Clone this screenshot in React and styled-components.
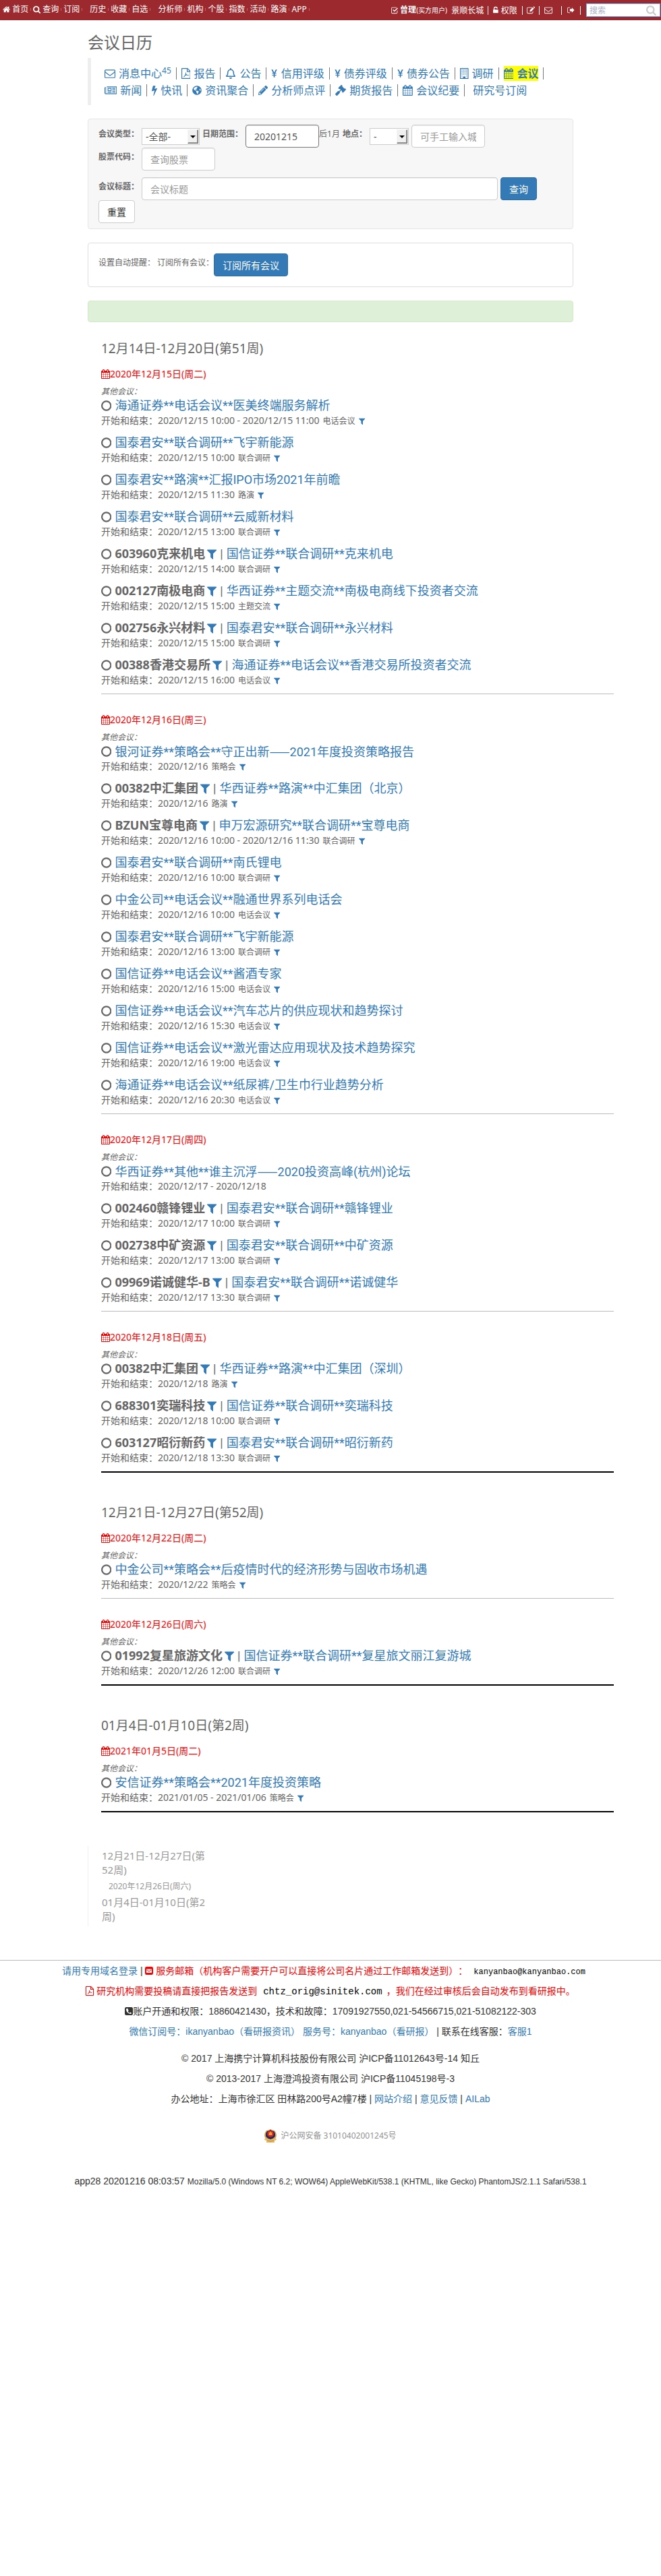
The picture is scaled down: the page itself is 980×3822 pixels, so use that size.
import React from 'react';
import styled, { createGlobalStyle } from 'styled-components';
import { FaPencilAlt, FaRegBell, FaGlobeAmericas, FaGavel } from 'react-icons/fa';

const latin = '"Noto Sans", "Noto Sans CJK SC", sans-serif';
const compact = 'Roboto, "Noto Sans CJK SC", sans-serif';

const GlobalStyle = createGlobalStyle`
  *, *::before, *::after { box-sizing: border-box; }
  body {
    margin: 0;
    background: #fff;
    color: #666;
    font: 12px/17px ${latin};
    text-spacing-trim: space-all;
  }
  a { color: #337ab7; text-decoration: none; }
  h1, h2, h3, h4, p { margin: 0; padding: 0; font-weight: 400; }
  input, select, button { font-family: inherit; margin: 0; }
`;

/* ---------- icons ---------- */

const GLYPHS = {
  calendar: ['64 0 1664 1792', 'M192 1664h288v-288h-288v288zm352 0h320v-288h-320v288zm-352-352h288v-320h-288v320zm352 0h320v-320h-320v320zm-352-384h288v-288h-288v288zm736 736h320v-288h-320v288zm-384-736h320v-288h-320v288zm768 736h288v-288h-288v288zm-384-352h320v-320h-320v320zm-352-864v-288q0-13-9.5-22.5t-22.5-9.5h-64q-13 0-22.5 9.5t-9.5 22.5v288q0 13 9.5 22.5t22.5 9.5h64q13 0 22.5-9.5t9.5-22.5zm736 864h288v-320h-288v320zm-384-384h320v-288h-320v288zm384 0h288v-288h-288v288zm32-480v-288q0-13-9.5-22.5t-22.5-9.5h-64q-13 0-22.5 9.5t-9.5 22.5v288q0 13 9.5 22.5t22.5 9.5h64q13 0 22.5-9.5t9.5-22.5zm384-64v1280q0 52-38 90t-90 38h-1408q-52 0-90-38t-38-90v-1280q0-52 38-90t90-38h128v-96q0-66 47-113t113-47h64q66 0 113 47t47 113v96h384v-96q0-66 47-113t113-47h64q66 0 113 47t47 113v96h128q52 0 90 38t38 90z'],
  filter: ['192 0 1408 1792', 'M1595 295q17 41-14 70l-493 493v742q0 42-39 59-13 5-25 5-27 0-45-19l-256-256q-19-19-19-45v-486l-493-493q-31-29-14-70 17-39 59-39h1280q42 0 59 39z'],
  circle: ['128 0 1536 1792', 'M896 352q-148 0-273 73t-198 198-73 273 73 273 198 198 273 73 273-73 198-198 73-273-73-273-198-198-273-73zm768 544q0 209-103 385.5t-279.5 279.5-385.5 103-385.5-103-279.5-279.5-103-385.5 103-385.5 279.5-279.5 385.5-103 385.5 103 279.5 279.5 103 385.5z'],
  home: ['64 0 1664 1792', 'M1472 992v480q0 26-19 45t-45 19h-384v-384h-256v384h-384q-26 0-45-19t-19-45v-480q0-1 .5-3t.5-3l575-474 575 474q1 2 1 6zm223-69l-62 74q-8 9-21 11h-3q-13 0-21-7l-692-577-692 577q-12 8-24 7-13-2-21-11l-62-74q-8-10-7-23.5t11-21.5l719-599q32-26 76-26t76 26l244 204v-195q0-14 9-23t23-9h192q14 0 23 9t9 23v408l219 182q10 8 11 21.5t-7 23.5z'],
  search: ['64 0 1664 1792', 'M1216 832q0-185-131.5-316.5t-316.5-131.5-316.5 131.5-131.5 316.5 131.5 316.5 316.5 131.5 316.5-131.5 131.5-316.5zm512 832q0 52-38 90t-90 38q-54 0-90-38l-343-342q-179 124-399 124-143 0-273.5-55.5t-225-150-150-225-55.5-273.5 55.5-273.5 150-225 225-150 273.5-55.5 273.5 55.5 225 150 150 225 55.5 273.5q0 220-124 399l343 343q37 37 37 90z'],
  envelope: ['0 0 1792 1792', 'M1664 1504v-768q-32 36-69 66-268 206-426 338-51 43-83 67t-86.5 48.5-102.5 24.5h-2q-48 0-102.5-24.5t-86.5-48.5-83-67q-158-132-426-338-37-30-69-66v768q0 13 9.5 22.5t22.5 9.5h1472q13 0 22.5-9.5t9.5-22.5zm0-1051v-24.5l-.5-13-3-12.5-5.5-9-9-7.5-14-2.5h-1472q-13 0-22.5 9.5t-9.5 22.5q0 168 147 284 193 152 401 317 6 5 35 29.5t46 37.5 44.5 31.5 50.5 27.5 43 9h2q20 0 43-9t50.5-27.5 44.5-31.5 46-37.5 35-29.5q208-165 401-317 54-43 100.5-115.5t46.5-131.5zm128-37v1088q0 66-47 113t-113 47h-1472q-66 0-113-47t-47-113v-1088q0-66 47-113t113-47h1472q66 0 113 47t47 113z'],
  bolt: ['448 0 896 1792', 'M1333 566q18 20 7 44l-540 1157q-13 25-42 25-4 0-14-2-17-5-25.5-19t-4.5-30l197-808-406 101q-4 1-12 1-18 0-31-11-18-15-13-39l201-825q4-14 16-23t28-9h328q19 0 32 12.5t13 29.5q0 8-5 18l-171 463 396-98q8-2 12-2 19 0 34 15z'],
  yen: ['384 0 1024 1792', 'M800 1536V1230H544V1110H800V985L775 930H544V810H715L420 256H650L896 760L1142 256H1372L1077 810H1248V930H1017L992 985V1110H1248V1230H992V1536z'],
  building: ['192 0 1408 1792', 'M256 0h1280q64 0 64 64v1664q0 64-64 64H256q-64 0-64-64V64q0-64 64-64zM320 128v1536h384v-256h384v256h384V128zM448 256h128v128H448zm256 0h128v128H704zm256 0h128v128H960zm256 0h128v128h-128zM448 512h128v128H448zm256 0h128v128H704zm256 0h128v128H960zm256 0h128v128h-128zM448 768h128v128H448zm256 0h128v128H704zm256 0h128v128H960zm256 0h128v128h-128zM448 1024h128v128H448zm256 0h128v128H704zm256 0h128v128H960zm256 0h128v128h-128zM448 1280h128v128H448zm768 0h128v128h-128z'],
  news: ['0 0 2048 1792', 'M384 256h1664v1152q0 128-128 128H192Q0 1536 0 1344V384h256v960q0 64 64 64h1540q60 0 60-64V384H384zM128 512v832q0 64 64 64V512zM512 512h640v512H512zm128 128v256h384V640zM1280 512h512v128h-512zm0 256h512v128h-512zm0 256h512v128h-512zM512 1152h640v128H512zm768 128h512v-64h-512z'],
  check: ['128 0 1664 1792', 'M416 256h832q70 0 130 30l-98 98H416q-160 0-160 160v832q0 160 160 160h832q160 0 160-160v-318l128-128v446q0 288-288 288H416q-288 0-288-288V544q0-288 288-288zM450 880l150-150 258 258 614-614 150 150-764 764z'],
  lock: ['320 0 1152 1792', 'M640 768h736q96 0 96 96v576q0 96-96 96H416q-96 0-96-96V864q0-96 96-96h32V576q0-448 448-448t448 448h-192q0-256-256-256T640 576z'],
  edit: ['0 0 1792 1792', 'M288 256h832q70 0 130 30l-98 98H288q-160 0-160 160v832q0 160 160 160h832q160 0 160-160v-126l128-128v254q0 288-288 288H288Q0 1664 0 1376V544q0-288 288-288zM672 928l640-640 288 288-640 640H672zM1408 192l92-92q68-68 136 0l152 152q68 68 0 136l-92 92z'],
  signout: ['64 0 1664 1792', 'M352 256h320v128H352q-160 0-160 160v704q0 160 160 160h320v128H352Q64 1536 64 1248V544q0-288 288-288zM640 640h448V352l544 544-544 544v-288H640z'],
  mailSquare: ['128 0 1536 1792', 'M416 128h960q288 0 288 288v960q0 288-288 288H416q-288 0-288-288V416q0-288 288-288zM384 576v640q0 64 64 64h896q64 0 64-64V576H384zM470 660l426 300 426-300v130l-426 300-426-300z'],
  phoneSquare: ['128 0 1536 1792', 'M416 128h960q288 0 288 288v960q0 288-288 288H416q-288 0-288-288V416q0-288 288-288zM500 384q-116 60-116 170 0 330 265 589t589 265q110 0 170-116l-20-70-230-120q-40 0-120 120-60 0-180-110-150-140-120-210 90-60 100-120L680 384z'],
  pdf: ['128 0 1536 1792', 'M256 0h896l512 512v1184q0 96-96 96H224q-96 0-96-96V96q0-96 96-96zM256 128v1536h1280V640h-512V128zm896 48v336h336zM820 720q110-20 80 180 50 150 160 210 300-20 300 90-30 120-330-10l-260 70q-170 280-260 260-100-60 180-310l140-300q-80-170-10-190z'],
};

const IconSvg = styled.svg`
  height: ${(p) => p.$size || '1em'};
  width: auto;
  fill: currentColor;
  fill-rule: evenodd;
  vertical-align: -2px;
  flex: none;
`;

function Icon({ name, size }) {
  const [box, d] = GLYPHS[name];
  return (
    <IconSvg viewBox={box} $size={size} aria-hidden="true">
      <path d={d} />
    </IconSvg>
  );
}

/* ---------- top bar ---------- */

const TopBar = styled.header`
  display: flex;
  justify-content: space-between;
  align-items: center;
  height: 30px;
  padding: 0 1px 0 4px;
  background: #9c292e;
  color: #fff;
  white-space: nowrap;
  a { color: #fff; }
`;
const TopNav = styled.nav`
  display: flex;
  gap: 8px;
  padding-bottom: 3px;
`;
const NavGroup = styled.div`
  display: flex;
`;
const NavLink = styled.a`
  display: flex;
  align-items: center;
  gap: 3px;
  &::after {
    content: '';
    width: 1px;
    height: 4px;
    margin-right: 3px;
    background: #b9686c;
  }
`;
const UserBar = styled.div`
  display: flex;
  align-items: center;
  gap: 6px;
`;
const UserName = styled.a`
  display: flex;
  align-items: center;
  gap: 2px;
  small { font-size: 10px; }
`;
const Tool = styled.a`
  display: flex;
  align-items: center;
  gap: 4px;
  padding: ${(p) => p.$pad || '0 1px'};
`;
const Bar = styled.i`
  width: 1px;
  height: 13px;
  background: #fff;
`;
const SearchBox = styled.label`
  display: flex;
  align-items: center;
  width: 110px;
  height: 20px;
  margin-left: 2px;
  padding: 0 5px 0 4px;
  background: #fff;
  border: 1px solid #66afe9;
  color: #ccc;
  input {
    width: 100%;
    min-width: 0;
    padding: 0;
    border: 0;
    outline: 0;
    background: none;
    font-size: 12px;
    &::placeholder { color: #aab2c8; opacity: 1; }
  }
`;

/* ---------- page ---------- */

const Page = styled.main`
  max-width: 750px;
  margin: 0 auto;
  padding: 0 15px;
`;
const Title = styled.h1`
  padding: 16px 0 6px;
  font-size: 24px;
  line-height: 34px;
`;
const Topics = styled.nav`
  border-left: 5px solid #eee;
  padding: 10px 0 10px 20px;
  margin-bottom: 20px;
  font-size: 16px;
  white-space: nowrap;
`;
const TopicLine = styled.div`
  display: flex;
  align-items: center;
  height: 25px;
`;
const Topic = styled.span`
  display: flex;
  align-items: center;
  margin-left: ${(p) => (p.$last ? '5px' : '0')};
  a {
    display: flex;
    align-items: center;
    gap: 5px;
    line-height: 22px;
    font-weight: ${(p) => (p.$active ? 700 : 400)};
    background: ${(p) => (p.$active ? '#ff0' : 'none')};
  }
  sup { align-self: flex-start; margin-left: -5px; font-size: 12px; line-height: 14px; }
  &::after {
    content: '';
    display: ${(p) => (p.$last ? 'none' : 'block')};
    width: 1px;
    height: 18px;
    margin: 0 7px;
    background: #777;
  }
`;

const Panel = styled.section`
  margin-bottom: 20px;
  padding: ${(p) => p.$pad || '8px 15px'};
  border: 1px solid ${(p) => p.$line || '#ddd'};
  border-radius: 4px;
  background: ${(p) => p.$bg || '#fff'};
`;
const FormRow = styled.div`
  display: flex;
  gap: ${(p) => p.$gap || '4px'};
  margin-top: ${(p) => p.$top || '0px'};
  align-items: center;
`;
const DateGroup = styled.div`
  display: flex;
`;
const Label = styled.label`
  align-self: flex-start;
  padding-top: 5px;
  font-weight: ${(p) => (p.$plain ? 400 : 700)};
  white-space: nowrap;
`;
const TextInput = styled.input`
  width: ${(p) => (p.$wide ? '528px' : '109px')};
  flex: 0 1 auto;
  min-width: 0;
  height: 34px;
  padding: 6px 12px;
  border: 1px solid ${(p) => (p.$dark ? '#777' : '#ccc')};
  border-radius: 4px;
  background: #fff;
  color: #555;
  font-size: 14px;
  box-shadow: inset 0 1px 1px rgba(0, 0, 0, 0.075);
  &::placeholder { color: #999; opacity: 1; }
`;
const SelectWrap = styled.span`
  display: flex;
  align-items: stretch;
  width: ${(p) => p.$w};
  height: 25px;
  padding: 1px;
  border: 1px solid #ccc;
  background: #fff;
  position: relative;
  &::before {
    content: '';
    position: absolute;
    right: 1px;
    top: 1px;
    width: 16px;
    height: 21px;
    background: #f0f0f0;
    border: 1px solid;
    border-color: #f4f4f4 #696969 #696969 #f4f4f4;
    box-shadow: inset -1px -1px #a0a0a0;
    pointer-events: none;
  }
  &::after {
    content: '';
    position: absolute;
    right: 5px;
    top: 10px;
    border: 4px solid transparent;
    border-top-color: #000;
    border-bottom: 0;
    pointer-events: none;
  }
`;
const Select = styled.select`
  width: 100%;
  padding: 0 4px;
  border: 0;
  background: none;
  appearance: none;
  color: #555;
  font-size: 14px;
`;
const Button = styled.button`
  height: 34px;
  padding: 0 12px;
  border: 1px solid ${(p) => (p.$primary ? '#2e6da4' : '#ccc')};
  border-radius: 4px;
  background: ${(p) => (p.$primary ? '#337ab7' : '#fff')};
  color: ${(p) => (p.$primary ? '#fff' : '#333')};
  font-size: 14px;
  white-space: nowrap;
`;

const Weeks = styled.div`
  margin: 0 -60px 0 20px;
  padding-bottom: 10px;
`;
const WeekTitle = styled.h2`
  padding: 7px 0 16px;
  font-size: 19px;
  line-height: 24px;
`;
const Day = styled.section`
  margin-bottom: ${(p) => (p.$last ? '40px' : '28px')};
  border-bottom: ${(p) => (p.$last ? '2px solid #000' : '1px solid #bbb')};
`;
const DayTitle = styled.h3`
  padding-bottom: 7px;
  color: #f00;
  font-size: 14px;
  line-height: 20px;
`;
const Kind = styled.em`
  display: block;
`;
const Meeting = styled.article`
  padding-bottom: 10px;
`;
const MeetingTitle = styled.h4`
  display: flex;
  align-items: center;
  gap: 5px;
  height: 25px;
  font: 18px/25px ${compact};
  white-space: nowrap;
`;
const Dash = styled.span`
  font-family: "Noto Sans CJK SC", sans-serif;
`;
const Stock = styled.b`
  display: flex;
  align-items: center;
  gap: 3px;
  font-family: ${latin};
  a { display: flex; }
`;
const When = styled.p`
  font-size: 14px;
  line-height: 20px;
  small { margin-left: 5px; font-size: 12px; line-height: 1; }
  small a { margin-left: 5px; }
`;

const Outline = styled.nav`
  width: 180px;
  padding: 4px 0;
  border-left: 1px solid #eee;
`;
const OutlineLink = styled.a`
  display: block;
  padding-left: ${(p) => (p.$sub ? '30px' : '20px')};
  margin: ${(p) => (p.$sub ? '5px 0' : '0')};
  color: #999;
  font-size: ${(p) => (p.$sub ? '12px' : '15px')};
  line-height: ${(p) => (p.$sub ? '17px' : '21px')};
`;

const Footer = styled.footer`
  margin-top: 50px;
  border-top: 1px solid #bbb;
  padding-top: 5px;
  color: #333;
  font: 14px/20px "Liberation Sans", "Noto Sans CJK SC", sans-serif;
  text-align: center;
  white-space: nowrap;
`;
const Line = styled.p`
  margin-bottom: ${(p) => p.$after || '10px'};
  color: ${(p) => (p.$red ? '#f00' : 'inherit')};
`;
const Red = styled.span`
  color: #f00;
`;
const Mail = styled.span`
  margin: 0 ${(p) => p.$after} 0 9px;
  color: #000;
  font-family: "Liberation Mono", monospace;
  font-size: ${(p) => p.$size};
  line-height: 1;
`;
const Police = styled.a`
  display: flex;
  justify-content: center;
  align-items: center;
  gap: 6px;
  height: 34px;
  margin: 28px 0 40px;
  color: #939393;
  font: 12px/20px ${latin};
`;
const Agent = styled.small`
  font-size: 12px;
  line-height: 1;
`;

/* ---------- data ---------- */

const NAV = [
  [['首页', 'home'], ['查询', 'search'], ['订阅']],
  [['历史'], ['收藏'], ['自选']],
  [['分析师'], ['机构'], ['个股'], ['指数'], ['活动'], ['路演'], ['APP']],
];

const TOPICS = [
  [
    { t: '消息中心', i: <Icon name="envelope" />, sup: '45' },
    { t: '报告', i: <Icon name="pdf" /> },
    { t: '公告', i: <FaRegBell size={16} /> },
    { t: '信用评级', i: <Icon name="yen" /> },
    { t: '债券评级', i: <Icon name="yen" /> },
    { t: '债券公告', i: <Icon name="yen" /> },
    { t: '调研', i: <Icon name="building" /> },
    { t: '会议', i: <Icon name="calendar" />, active: true },
  ],
  [
    { t: '新闻', i: <Icon name="news" /> },
    { t: '快讯', i: <Icon name="bolt" /> },
    { t: '资讯聚合', i: <FaGlobeAmericas size={14} /> },
    { t: '分析师点评', i: <FaPencilAlt size={14} /> },
    { t: '期货报告', i: <FaGavel size={16} /> },
    { t: '会议纪要', i: <Icon name="calendar" /> },
    { t: '研究号订阅', last: true },
  ],
];

// [title, time, kind, stock]
const WEEKS = [
  {
    title: '12月14日-12月20日(第51周)',
    days: [
      ['2020年12月15日(周二)', [
        ['海通证券**电话会议**医美终端服务解析', '2020/12/15 10:00 - 2020/12/15 11:00', '电话会议'],
        ['国泰君安**联合调研**飞宇新能源', '2020/12/15 10:00', '联合调研'],
        ['国泰君安**路演**汇报IPO市场2021年前瞻', '2020/12/15 11:30', '路演'],
        ['国泰君安**联合调研**云威新材料', '2020/12/15 13:00', '联合调研'],
        ['国信证券**联合调研**克来机电', '2020/12/15 14:00', '联合调研', '603960克来机电'],
        ['华西证券**主题交流**南极电商线下投资者交流', '2020/12/15 15:00', '主题交流', '002127南极电商'],
        ['国泰君安**联合调研**永兴材料', '2020/12/15 15:00', '联合调研', '002756永兴材料'],
        ['海通证券**电话会议**香港交易所投资者交流', '2020/12/15 16:00', '电话会议', '00388香港交易所'],
      ]],
      ['2020年12月16日(周三)', [
        ['银河证券**策略会**守正出新——2021年度投资策略报告', '2020/12/16', '策略会'],
        ['华西证券**路演**中汇集团（北京）', '2020/12/16', '路演', '00382中汇集团'],
        ['申万宏源研究**联合调研**宝尊电商', '2020/12/16 10:00 - 2020/12/16 11:30', '联合调研', 'BZUN宝尊电商'],
        ['国泰君安**联合调研**南氏锂电', '2020/12/16 10:00', '联合调研'],
        ['中金公司**电话会议**融通世界系列电话会', '2020/12/16 10:00', '电话会议'],
        ['国泰君安**联合调研**飞宇新能源', '2020/12/16 13:00', '联合调研'],
        ['国信证券**电话会议**酱酒专家', '2020/12/16 15:00', '电话会议'],
        ['国信证券**电话会议**汽车芯片的供应现状和趋势探讨', '2020/12/16 15:30', '电话会议'],
        ['国信证券**电话会议**激光雷达应用现状及技术趋势探究', '2020/12/16 19:00', '电话会议'],
        ['海通证券**电话会议**纸尿裤/卫生巾行业趋势分析', '2020/12/16 20:30', '电话会议'],
      ]],
      ['2020年12月17日(周四)', [
        ['华西证券**其他**谁主沉浮——2020投资高峰(杭州)论坛', '2020/12/17 - 2020/12/18'],
        ['国泰君安**联合调研**赣锋锂业', '2020/12/17 10:00', '联合调研', '002460赣锋锂业'],
        ['国泰君安**联合调研**中矿资源', '2020/12/17 13:00', '联合调研', '002738中矿资源'],
        ['国泰君安**联合调研**诺诚健华', '2020/12/17 13:30', '联合调研', '09969诺诚健华-B'],
      ]],
      ['2020年12月18日(周五)', [
        ['华西证券**路演**中汇集团（深圳）', '2020/12/18', '路演', '00382中汇集团'],
        ['国信证券**联合调研**奕瑞科技', '2020/12/18 10:00', '联合调研', '688301奕瑞科技'],
        ['国泰君安**联合调研**昭衍新药', '2020/12/18 13:30', '联合调研', '603127昭衍新药'],
      ]],
    ],
  },
  {
    title: '12月21日-12月27日(第52周)',
    days: [
      ['2020年12月22日(周二)', [
        ['中金公司**策略会**后疫情时代的经济形势与固收市场机遇', '2020/12/22', '策略会'],
      ]],
      ['2020年12月26日(周六)', [
        ['国信证券**联合调研**复星旅文丽江复游城', '2020/12/26 12:00', '联合调研', '01992复星旅游文化'],
      ]],
    ],
  },
  {
    title: '01月4日-01月10日(第2周)',
    days: [
      ['2021年01月5日(周二)', [
        ['安信证券**策略会**2021年度投资策略', '2021/01/05 - 2021/01/06', '策略会'],
      ]],
    ],
  },
];

function MeetingItem({ data: [title, time, kind, stock] }) {
  const [lead, rest] = title.split('——');
  return (
    <Meeting>
      <MeetingTitle>
        <Icon name="circle" />
        {stock && (
          <>
            <Stock>
              {stock}
              <a href="#stock" aria-label={stock}><Icon name="filter" /></a>
            </Stock>
            <span>|</span>
          </>
        )}
        <a href="#meeting">
          {lead}
          {rest && <Dash>——</Dash>}
          {rest}
        </a>
      </MeetingTitle>
      <When>
        开始和结束：{time}
        {kind && (
          <small>
            {kind}
            <a href="#kind" aria-label={kind}><Icon name="filter" /></a>
          </small>
        )}
      </When>
    </Meeting>
  );
}

function Badge() {
  return (
    <svg width="18" height="20" viewBox="0 0 18 20" aria-hidden="true">
      <path d="M1 13l2 1q6 4 12 0l2-1 1 3-3 1v3q-6 1-12 0v-3l-3-1z" fill="#e9bd6a" />
      <path d="M9 0q3 2 6 2 3 3 3 7 0 6-9 7-9-1-9-7 0-4 3-7 3 0 6-2z" fill="#dba552" />
      <path d="M9 1q3 2 5 2 2 2 2 6 0 4-7 6-7-2-7-6 0-4 2-6 2 0 5-2z" fill="#1d2a66" />
      <circle cx="9" cy="7" r="5" fill="#d3221c" />
      <path d="M9 3l1 2h2l-1 2 1 2H6l1-2-1-2h2z" fill="#f0a03c" />
      <path d="M4 17q5 2 10 0" fill="none" stroke="#b9822e" />
    </svg>
  );
}

export default function App() {
  return (
    <>
      <GlobalStyle />
      <TopBar>
        <TopNav>
          {NAV.map((group) => (
            <NavGroup key={group[0][0]}>
              {group.map(([text, icon]) => (
                <NavLink href="#nav" key={text}>
                  {icon && <Icon name={icon} />}
                  {text}
                </NavLink>
              ))}
            </NavGroup>
          ))}
        </TopNav>
        <UserBar>
          <UserName href="#user">
            <Icon name="check" />
            <span><b>曾理</b><small>(买方用户)</small></span>
          </UserName>
          <a href="#org">景顺长城</a>
          <Bar />
          <Tool href="#rights"><Icon name="lock" />权限</Tool>
          <Bar />
          <Tool href="#edit" aria-label="编辑" $pad="0"><Icon name="edit" /></Tool>
          <Bar />
          <Tool href="#mail" aria-label="消息" $pad="0 7px 0 1px"><Icon name="envelope" /></Tool>
          <Bar />
          <Tool href="#out" aria-label="退出" $pad="0 2px"><Icon name="signout" /></Tool>
          <Bar />
          <SearchBox>
            <input type="text" placeholder="搜索" aria-label="搜索" />
            <Icon name="search" size="16px" />
          </SearchBox>
        </UserBar>
      </TopBar>

      <Page>
        <Title>会议日历</Title>
        <Topics>
          {TOPICS.map((line, n) => (
            <TopicLine key={n}>
              {line.map(({ t, i, sup, active, last }) => (
                <Topic key={t} $active={active} $last={last}>
                  <a href="#topic">
                    {i}
                    {t}
                    {sup && <sup>{sup}</sup>}
                  </a>
                </Topic>
              ))}
            </TopicLine>
          ))}
        </Topics>

        <Panel $bg="#f7f7f7" $line="#e5e5e5">
          <FormRow>
            <Label htmlFor="type">会议类型：</Label>
            <SelectWrap $w="86px">
              <Select id="type"><option>-全部-</option></Select>
            </SelectWrap>
            <Label htmlFor="date">日期范围：</Label>
            <DateGroup>
              <TextInput id="date" $dark defaultValue="20201215" />
              <Label $plain htmlFor="date">后1月</Label>
            </DateGroup>
            <Label htmlFor="place">地点：</Label>
            <SelectWrap $w="58px">
              <Select id="place"><option>-</option></Select>
            </SelectWrap>
            <TextInput placeholder="可手工输入城市" aria-label="城市" />
          </FormRow>
          <FormRow>
            <Label htmlFor="code">股票代码：</Label>
            <TextInput id="code" placeholder="查询股票" />
          </FormRow>
          <FormRow $top="10px">
            <Label htmlFor="title">会议标题：</Label>
            <TextInput id="title" $wide placeholder="会议标题" />
            <Button type="button" $primary>查询</Button>
          </FormRow>
          <FormRow>
            <Button type="button">重置</Button>
          </FormRow>
        </Panel>

        <Panel $pad="15px">
          <FormRow $gap="0">
            <Label as="span" $plain>设置自动提醒： 订阅所有会议：</Label>
            <Button type="button" $primary>订阅所有会议</Button>
          </FormRow>
        </Panel>

        <Panel $pad="15px" $bg="#dff0d8" $line="#d6e9c6" />

        <Weeks>
          {WEEKS.map((week) => (
            <section key={week.title}>
              <WeekTitle>{week.title}</WeekTitle>
              {week.days.map(([date, meetings], n) => (
                <Day key={date} $last={n === week.days.length - 1}>
                  <DayTitle><Icon name="calendar" />{date}</DayTitle>
                  <Kind>其他会议：</Kind>
                  {meetings.map((m) => (
                    <MeetingItem key={m[0]} data={m} />
                  ))}
                </Day>
              ))}
            </section>
          ))}
        </Weeks>

        <Outline>
          <OutlineLink href="#w52">12月21日-12月27日(第52周)</OutlineLink>
          <OutlineLink href="#d26" $sub>2020年12月26日(周六)</OutlineLink>
          <OutlineLink href="#w2">01月4日-01月10日(第2周)</OutlineLink>
        </Outline>
      </Page>

      <Footer>
        <Line>
          <a href="#domain">请用专用域名登录</a> |{' '}
          <Red><Icon name="mailSquare" /> 服务邮箱（机构客户需要开户可以直接将公司名片通过工作邮箱发送到）：</Red>
          <Mail $size="12px" $after="20px">kanyanbao@kanyanbao.com</Mail>
        </Line>
        <Line $red>
          <Icon name="pdf" /> 研究机构需要投稿请直接把报告发送到
          <Mail $size="14px" $after="6px">chtz_orig@sinitek.com</Mail>
          ，我们在经过审核后会自动发布到看研报中。
        </Line>
        <Line>
          <Icon name="phoneSquare" />账户开通和权限：18860421430，技术和故障：17091927550,021-54566715,021-51082122-303
        </Line>
        <Line $after="20px">
          <a href="#wechat">微信订阅号：ikanyanbao（看研报资讯） 服务号：kanyanbao（看研报）</a> | 联系在线客服：<a href="#service">客服1</a>
        </Line>
        <Line>© 2017 上海携宁计算机科技股份有限公司 沪ICP备11012643号-14 知丘</Line>
        <Line>© 2013-2017 上海澄鸿投资有限公司 沪ICP备11045198号-3</Line>
        <Line>
          办公地址：上海市徐汇区 田林路200号A2幢7楼 | <a href="#about">网站介绍</a> | <a href="#feedback">意见反馈</a> | <a href="#ailab">AILab</a>
        </Line>
        <Police href="#police"><Badge />沪公网安备 31010402001245号</Police>
        <Line>
          app28 20201216 08:03:57 <Agent>Mozilla/5.0 (Windows NT 6.2; WOW64) AppleWebKit/538.1 (KHTML, like Gecko) PhantomJS/2.1.1 Safari/538.1</Agent>
        </Line>
      </Footer>
    </>
  );
}
